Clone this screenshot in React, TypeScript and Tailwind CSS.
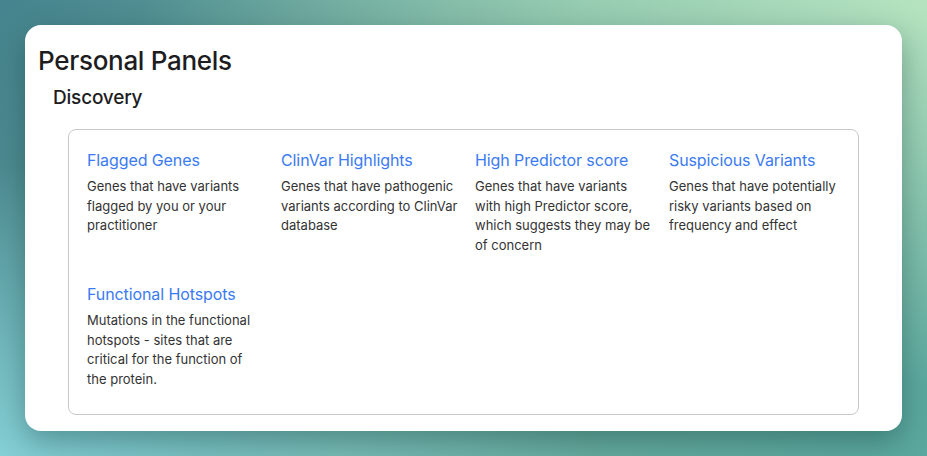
import React from "react";

const items = [
  { title: "Flagged Genes", desc: "Genes that have variants flagged by you or your practitioner" },
  { title: "ClinVar Highlights", desc: "Genes that have pathogenic variants according to ClinVar database" },
  { title: "High Predictor score", desc: "Genes that have variants with high Predictor score, which suggests they may be of concern" },
  { title: "Suspicious Variants", desc: "Genes that have potentially risky variants based on frequency and effect" },
  { title: "Functional Hotspots", desc: "Mutations in the functional hotspots - sites that are critical for the function of the protein." },
];

export default function App() {
  return (
    <div
      className="h-[456px] w-full px-[25px] pt-[25px] bg-[radial-gradient(ellipse_at_100%_0%,#b6e4c0_0%,rgba(182,228,192,0)_60%),radial-gradient(ellipse_at_0%_100%,#84d0d6_0%,rgba(132,208,214,0)_45%),linear-gradient(120deg,#45848e_0%,#6fae9f_50%,#5aa89f_100%)]"
      style={{ fontFamily: "Inter, 'Noto Sans', sans-serif" }}
    >
      <div className="h-[406px] rounded-[16px] bg-white px-[13px] pt-[20px] shadow-[0_10px_30px_rgba(0,40,40,0.35)]">
        <h1 className="text-[26px] leading-[32px] font-medium tracking-[-0.3px] text-[#1d1d1f]">Personal Panels</h1>
        <div className="px-[15px] pt-[7px]">
          <h2 className="text-[19px] leading-[28px] font-medium tracking-[-0.2px] text-[#1d1d1f]">Discovery</h2>
          <div className="mx-[15px] mt-[17px] rounded-[8px] border border-[#c8c8c8] pl-[18px] pt-[18px] pb-[25px]">
            <div className="grid grid-cols-[repeat(4,194px)] gap-y-[27px]">
              {items.map((it) => (
                <div key={it.title} className="pr-[16px]">
                  <div className="text-[16px] leading-[24px] text-[#3a7af2] tracking-[-0.1px]">{it.title}</div>
                  <p className="mt-[5px] text-[13px] leading-[19.5px] text-[#333333]">{it.desc}</p>
                </div>
              ))}
            </div>
          </div>
        </div>
      </div>
    </div>
  );
}
